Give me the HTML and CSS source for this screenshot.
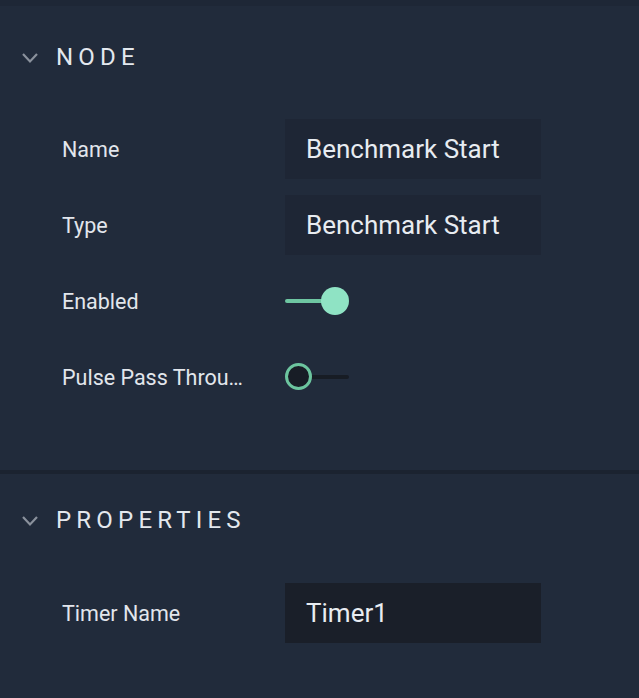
FILE: index.html
```html
<!DOCTYPE html>
<html>
<head>
<meta charset="utf-8">
<link rel="stylesheet" href="styles.css">
</head>
<body>
<div class="panel">
  <div class="topbar"></div>
  <section class="section section-node">
    <div class="header">
      <svg class="chevron" width="18" height="12" viewBox="0 0 18 12"><polyline points="2,2 9,9.5 16,2" fill="none" stroke="#8a919c" stroke-width="2.2"/></svg>
      <span class="title">NODE</span>
    </div>
    <div class="rows">
      <div class="row">
        <div class="label">Name</div>
        <div class="field">Benchmark Start</div>
      </div>
      <div class="row">
        <div class="label">Type</div>
        <div class="field">Benchmark Start</div>
      </div>
      <div class="row">
        <div class="label">Enabled</div>
        <div class="toggle on"><span class="track"></span><span class="knob"></span></div>
      </div>
      <div class="row">
        <div class="label">Pulse Pass Through</div>
        <div class="toggle off"><span class="track"></span><span class="knob"></span></div>
      </div>
    </div>
  </section>
  <section class="section section-props">
    <div class="header">
      <svg class="chevron" width="18" height="12" viewBox="0 0 18 12"><polyline points="2,2 9,9.5 16,2" fill="none" stroke="#8a919c" stroke-width="2.2"/></svg>
      <span class="title">PROPERTIES</span>
    </div>
    <div class="rows">
      <div class="row">
        <div class="label">Timer Name</div>
        <div class="field dark">Timer1</div>
      </div>
    </div>
  </section>
</div>
</body>
</html>
```

FILE: styles.css
```css
html, body {
  margin: 0;
  padding: 0;
  background: #212b3b;
}
body {
  font-family: Roboto, "Noto Sans", sans-serif;
  color: #e4e8ee;
  width: 639px;
  height: 698px;
  overflow: hidden;
}
.panel {
  display: flex;
  flex-direction: column;
}
.topbar {
  height: 6px;
  background: #1e2736;
}
.section {
  display: flex;
  flex-direction: column;
}
.section-node {
  padding-top: 26px;
  padding-bottom: 63px;
  border-bottom: 4px solid #1b2330;
}
.section-props {
  padding-top: 21px;
}
.header {
  height: 50px;
  display: flex;
  align-items: center;
  padding-left: 21px;
  gap: 17px;
}
.chevron {
  display: block;
  margin-top: 2px;
}
.title {
  font-size: 24px;
  letter-spacing: 5.2px;
  color: #e3e8ee;
}
.rows {
  display: flex;
  flex-direction: column;
  gap: 16px;
  padding-top: 37px;
}
.section-props .rows {
  padding-top: 38px;
}
.row {
  display: flex;
  align-items: center;
  height: 60px;
}
.label {
  width: 188px;
  margin-left: 62px;
  margin-right: 35px;
  font-size: 21.5px;
  white-space: nowrap;
  overflow: hidden;
  text-overflow: ellipsis;
  color: #e2e6ec;
}
.field {
  width: 256px;
  height: 60px;
  box-sizing: border-box;
  padding-left: 21px;
  display: flex;
  align-items: center;
  font-size: 26px;
  background: #1e2635;
  color: #e8ecf1;
}
.field.dark {
  background: #1a1f29;
}
.toggle {
  position: relative;
  width: 64px;
  height: 28px;
}
.toggle .track {
  position: absolute;
  left: 0;
  right: 0;
  top: 12px;
  height: 4px;
  border-radius: 2px;
}
.toggle .knob {
  position: absolute;
  top: 0;
  width: 28px;
  height: 28px;
  box-sizing: border-box;
  border-radius: 50%;
}
.toggle.on .track {
  background: #6ec6a2;
  right: 14px;
}
.toggle.on .knob {
  right: 0;
  background: #8fe3c4;
}
.toggle.off .track {
  background: #171c24;
}
.toggle.off .knob {
  left: 0;
  background: #181d26;
  border: 3px solid #6cc59f;
  width: 27px;
  height: 27px;
}
```
